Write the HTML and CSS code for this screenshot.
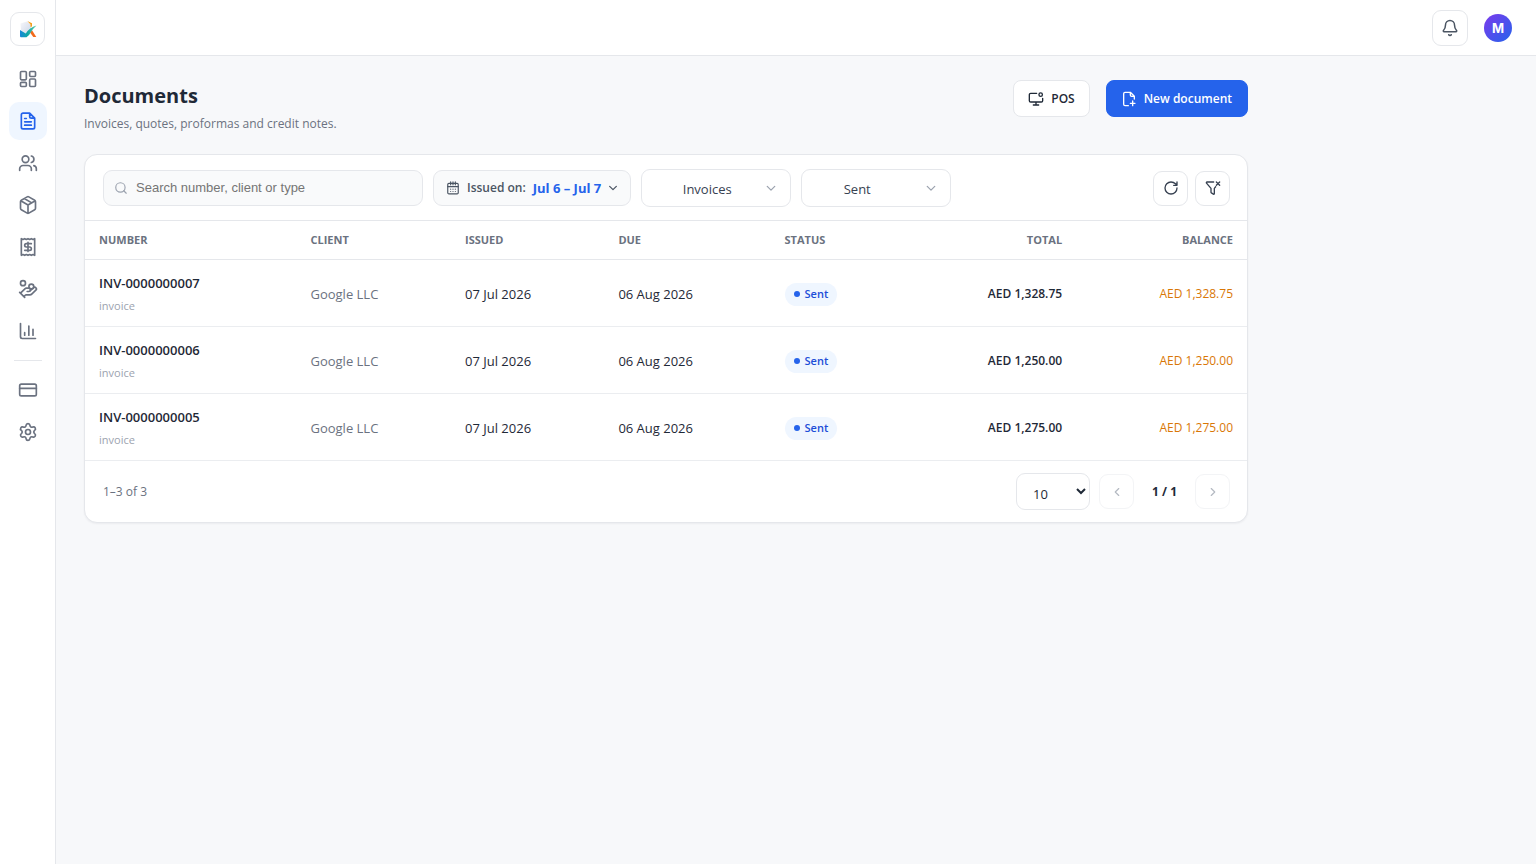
FILE: index.html
```
<!DOCTYPE html>
<html lang="en">
<head>
<meta charset="utf-8">
<meta name="viewport" content="width=device-width, initial-scale=1">
<title>Documents</title>
<link rel="stylesheet" href="styles.css">
</head>
<body>
<div class="app">
  <aside class="sidebar">
    <a class="brand" href="#" aria-label="Home">
      <svg width="18" height="18" viewBox="0 0 18 18">
        <defs>
          <linearGradient id="teal" x1="0" y1="0" x2="1" y2="0"><stop offset="0" stop-color="#1687d9"/><stop offset=".45" stop-color="#10a7a5"/><stop offset="1" stop-color="#5cc9a7"/></linearGradient>
          <linearGradient id="paper" x1="0" y1="0" x2="1" y2="1"><stop offset="0" stop-color="#f7f7fa"/><stop offset="1" stop-color="#ccd6e8"/></linearGradient>
        </defs>
        <path d="M1.500 3.500 8 1.500l4 3.500v5L7.500 14 2 10.500z" fill="url(#paper)"/>
        <path d="M8.300 1 13 3.200V6.500L11.500 7V4.500z" fill="#f59e1b"/>
        <path d="M11 12.500 13 10.200l4.300 6.800h-3z" fill="#f26a1b"/>
        <path d="M1 10 6.800 13.500Q10.500 7.500 17.500 5.500 14 8.500 12 12 10 16 7.500 17.300H2Q1 17.300 1 16z" fill="url(#teal)"/>
      </svg>
    </a>
    <nav class="nav" aria-label="Main">
      <a class="nav-item" href="#" aria-label="Dashboard"><svg class="icon icon-nav" viewBox="0 0 24 24"><rect x="3" y="3" width="7" height="10" rx="1.200"/><rect x="14" y="3" width="7" height="6" rx="1.200"/><rect x="14" y="12" width="7" height="9" rx="1.200"/><rect x="3" y="16" width="7" height="5" rx="1.200"/></svg></a>
      <a class="nav-item active" href="#" aria-label="Documents" aria-current="page"><svg class="icon icon-nav" viewBox="0 0 24 24"><path d="M14 2.500H6a2 2 0 0 0-2 2v15a2 2 0 0 0 2 2h12a2 2 0 0 0 2-2v-11zM14 2.500v4a2 2 0 0 0 2 2h4M8 9h2M8 13h8M8 17h8"/></svg></a>
      <a class="nav-item" href="#" aria-label="Clients"><svg class="icon icon-nav" viewBox="0 0 24 24"><circle cx="9" cy="7.500" r="4"/><path d="M2 21v-2a4 4 0 0 1 4-4h6a4 4 0 0 1 4 4v2M16 3.600a4 4 0 0 1 0 7.800M22 21v-2a4 4 0 0 0-3-3.870"/></svg></a>
      <a class="nav-item" href="#" aria-label="Products"><svg class="icon icon-nav" viewBox="0 0 24 24"><path d="M21 8a2 2 0 0 0-1-1.730l-7-4a2 2 0 0 0-2 0l-7 4A2 2 0 0 0 3 8v8a2 2 0 0 0 1 1.730l7 4a2 2 0 0 0 2 0l7-4A2 2 0 0 0 21 16zM12 22V12M3.300 7 12 12l8.700-5M7.500 4.270l9 5.150"/></svg></a>
      <a class="nav-item" href="#" aria-label="Expenses"><svg class="icon icon-nav" viewBox="0 0 24 24"><path d="M4 2v20l2-1 2 1 2-1 2 1 2-1 2 1 2-1 2 1V2l-2 1-2-1-2 1-2-1-2 1-2-1-2 1zM16 8h-6a2 2 0 0 0 0 4h4a2 2 0 0 1 0 4H8M12 6.500v11"/></svg></a>
      <a class="nav-item" href="#" aria-label="Payments"><svg class="icon icon-nav" viewBox="0 0 24 24"><path d="M11 15h2a2 2 0 1 0 0-4h-3c-.6 0-1.100.2-1.400.6L3 17M7 21l1.600-1.400c.3-.4.8-.6 1.400-.6h4c1.100 0 2.100-.4 2.800-1.200l4.600-4.400a2 2 0 0 0-2.750-2.910l-4.200 3.900M2 16l6 6"/><circle cx="16" cy="9" r="2.900"/><circle cx="6" cy="5" r="3"/></svg></a>
      <a class="nav-item" href="#" aria-label="Reports"><svg class="icon icon-nav" viewBox="0 0 24 24"><path d="M3 3v16a2 2 0 0 0 2 2h16M8 17v-3M13 17V6M18 17V10"/></svg></a>
      <hr class="nav-rule">
      <a class="nav-item" href="#" aria-label="Billing"><svg class="icon icon-nav" viewBox="0 0 24 24"><rect x="2" y="5" width="20" height="14" rx="2"/><path d="M2 10h20"/></svg></a>
      <a class="nav-item" href="#" aria-label="Settings"><svg class="icon icon-nav" viewBox="0 0 24 24"><path d="M9.670 4.140a2.340 2.340 0 0 1 4.660 0 2.340 2.340 0 0 0 3.320 1.910 2.340 2.340 0 0 1 2.330 4.030 2.340 2.340 0 0 0 0 3.840 2.340 2.340 0 0 1-2.330 4.030 2.340 2.340 0 0 0-3.320 1.910 2.340 2.340 0 0 1-4.660 0 2.340 2.340 0 0 0-3.320-1.910 2.340 2.340 0 0 1-2.330-4.030 2.340 2.340 0 0 0 0-3.840 2.340 2.340 0 0 1 2.330-4.030 2.340 2.340 0 0 0 3.320-1.910"/><circle cx="12" cy="12" r="3"/></svg></a>
    </nav>
  </aside>

  <div class="main">
    <header class="topbar">
      <button class="icon-btn bell" type="button" aria-label="Notifications"><svg class="icon icon-bell" viewBox="0 0 24 24"><path d="M10.300 21a2 2 0 0 0 3.400 0M3.260 15.330A1 1 0 0 0 4 17h16a1 1 0 0 0 .74-1.670C19.410 13.960 18 12.500 18 8A6 6 0 0 0 6 8c0 4.500-1.410 5.960-2.740 7.330"/></svg></button>
      <button class="avatar" type="button" aria-label="Account">M</button>
    </header>

    <main class="content">
      <div class="page-head">
        <div>
          <h1 class="title">Documents</h1>
          <p class="subtitle">Invoices, quotes, proformas and credit notes.</p>
        </div>
        <div class="actions">
          <button class="btn" type="button"><svg class="icon" viewBox="0 0 24 24"><path d="M13 3.500H4a2 2 0 0 0-2 2v9a2 2 0 0 0 2 2h16a2 2 0 0 0 2-2V11M12 16.500V21M8 21h8"/><circle cx="19" cy="5.500" r="2.600"/></svg>POS</button>
          <button class="btn btn-primary" type="button"><svg class="icon" viewBox="0 0 24 24"><path d="M11 22H6a2 2 0 0 1-2-2V4a2 2 0 0 1 2-2h8l6 6v4M14 2v4a2 2 0 0 0 2 2h4M14 18.500h7M17.500 15v7"/></svg>New document</button>
        </div>
      </div>

      <section class="card">
        <div class="toolbar">
          <label class="search">
            <svg class="icon icon-sm" viewBox="0 0 24 24"><circle cx="11" cy="11" r="8"/><path d="m21 21-4.300-4.300"/></svg>
            <input type="search" placeholder="Search number, client or type" aria-label="Search documents">
          </label>
          <button class="date-btn" type="button">
            <svg class="icon icon-sm" viewBox="0 0 24 24"><rect x="3" y="4" width="18" height="18" rx="2"/><path d="M8 1.500v5M16 1.500v5M12 1.500v5M3 9.500h18M8 14h.01M12 14h.01M16 14h.01M8 18h.01M12 18h.01M16 18h.01"/></svg>
            <span>Issued on:</span><strong>Jul 6 – Jul 7</strong>
            <svg class="icon icon-chev" viewBox="0 0 24 24"><path d="m4 8 8 8 8-8"/></svg>
          </button>
          <div class="select">
            <select aria-label="Document type"><option>Invoices</option><option>Quotes</option></select>
            <svg class="icon icon-chev" viewBox="0 0 24 24"><path d="m3 8 9 9 9-9"/></svg>
          </div>
          <div class="select select-status">
            <select aria-label="Status"><option>Sent</option><option>Paid</option></select>
            <svg class="icon icon-chev" viewBox="0 0 24 24"><path d="m3 8 9 9 9-9"/></svg>
          </div>
          <div class="tools">
            <button class="icon-btn" type="button" aria-label="Refresh"><svg class="icon" viewBox="0 0 24 24"><path d="M21 12a9 9 0 1 1-9-9c2.520 0 4.930 1 6.740 2.740L21 8M21 3v5h-5"/></svg></button>
            <button class="icon-btn" type="button" aria-label="Clear filters"><svg class="icon" viewBox="0 0 24 24"><path d="M13 3H3a1 1 0 0 0-.74 1.670L9 12.500V18.500a1 1 0 0 0 .55.900l3 1.800A1 1 0 0 0 14 20.300V12.500l2-2.300M17 3l5 5M22 3l-5 5"/></svg></button>
          </div>
        </div>

        <table class="docs">
          <colgroup><col class="c-num"><col class="c-client"><col class="c-issued"><col class="c-due"><col class="c-status"><col class="c-total"><col class="c-bal"></colgroup>
          <thead>
            <tr><th>Number</th><th>Client</th><th>Issued</th><th>Due</th><th>Status</th><th class="num">Total</th><th class="num">Balance</th></tr>
          </thead>
          <tbody>
            <tr><td><a class="doc-no" href="#">INV-0000000007</a><span class="doc-type">invoice</span></td><td class="muted">Google LLC</td><td>07 Jul 2026</td><td>06 Aug 2026</td><td><span class="badge">Sent</span></td><td class="num total">AED 1,328.75</td><td class="num balance">AED 1,328.75</td></tr>
            <tr><td><a class="doc-no" href="#">INV-0000000006</a><span class="doc-type">invoice</span></td><td class="muted">Google LLC</td><td>07 Jul 2026</td><td>06 Aug 2026</td><td><span class="badge">Sent</span></td><td class="num total">AED 1,250.00</td><td class="num balance">AED 1,250.00</td></tr>
            <tr><td><a class="doc-no" href="#">INV-0000000005</a><span class="doc-type">invoice</span></td><td class="muted">Google LLC</td><td>07 Jul 2026</td><td>06 Aug 2026</td><td><span class="badge">Sent</span></td><td class="num total">AED 1,275.00</td><td class="num balance">AED 1,275.00</td></tr>
          </tbody>
        </table>

        <footer class="pager">
          <span class="range">1–3 of 3</span>
          <select class="page-size" aria-label="Rows per page"><option>10</option><option>25</option><option>50</option></select>
          <button class="icon-btn" type="button" disabled aria-label="Previous page"><svg class="icon icon-sm" viewBox="0 0 24 24"><path d="m15 18-6-6 6-6"/></svg></button>
          <span class="page-no">1 / 1</span>
          <button class="icon-btn" type="button" disabled aria-label="Next page"><svg class="icon icon-sm" viewBox="0 0 24 24"><path d="m9 18 6-6-6-6"/></svg></button>
        </footer>
      </section>
    </main>
  </div>
</div>
</body>
</html>
```
FILE: styles.css
```
:root {
  --ink: #1f2937;
  --muted: #6b7280;
  --faint: #9ca3af;
  --line: #e5e7eb;
  --blue: #2563eb;
  --soft: #f9fafb;
}
* { box-sizing: border-box; }
body {
  margin: 0;
  background: #f7f8fa;
  color: var(--ink);
  font: 13px/20px "Open Sans", "Noto Sans", sans-serif;
}
button, select { font: inherit; color: inherit; margin: 0; }
button { cursor: pointer; }
a { color: inherit; text-decoration: none; }

.icon {
  width: 16px;
  height: 16px;
  flex: none;
  fill: none;
  stroke: currentColor;
  stroke-width: 2;
  stroke-linecap: round;
  stroke-linejoin: round;
}
.icon-nav { width: 20px; height: 20px; }
.icon-bell { width: 18px; height: 18px; }
.icon-sm { width: 14px; height: 14px; }
.icon-chev { width: 10px; height: 10px; stroke-width: 3; }

.app { display: flex; min-height: 100vh; }
.sidebar {
  width: 56px;
  flex: none;
  display: flex;
  flex-direction: column;
  align-items: center;
  padding-top: 12px;
  background: #fff;
  border-right: 1px solid var(--line);
}
.brand {
  display: grid;
  place-items: center;
  width: 35px;
  height: 34px;
  border: 1px solid var(--line);
  border-radius: 9px;
}
.nav {
  display: flex;
  flex-direction: column;
  align-items: center;
  gap: 4px;
  margin-top: 14px;
}
.nav-item {
  display: grid;
  place-items: center;
  width: 38px;
  height: 38px;
  border-radius: 10px;
  color: var(--muted);
}
.nav-item.active { background: #eff6ff; color: var(--blue); }
.nav-rule {
  width: 28px;
  height: 1px;
  margin: 6px 0;
  border: 0;
  background: var(--line);
}

.main { flex: 1; min-width: 0; }
.topbar {
  display: flex;
  align-items: center;
  justify-content: flex-end;
  gap: 16px;
  height: 56px;
  padding: 0 24px;
  background: #fff;
  border-bottom: 1px solid var(--line);
}
.icon-btn {
  display: grid;
  place-items: center;
  width: 35px;
  height: 35px;
  padding: 0;
  background: #fff;
  border: 1px solid var(--line);
  border-radius: 9px;
}
.icon-btn:disabled { color: #b4b9c2; border-color: #f3f4f6; cursor: default; }
.bell { width: 36px; height: 36px; color: #4b5563; }
.avatar {
  width: 28px;
  height: 28px;
  padding: 0;
  border: 0;
  border-radius: 50%;
  background: linear-gradient(135deg, #7c3aed, #2563eb);
  color: #fff;
  font: 700 13px/28px Inter, sans-serif;
}

.content { max-width: 1220px; padding: 24px 28px; }
.page-head {
  display: flex;
  align-items: flex-start;
  justify-content: space-between;
  margin-bottom: 20px;
}
.title { margin: 0; font-size: 20px; line-height: 32px; font-weight: 700; }
.subtitle { margin: 2px 0 0; color: var(--muted); font-size: 12px; }
.actions { display: flex; gap: 16px; }
.btn {
  display: flex;
  align-items: center;
  gap: 7px;
  height: 37px;
  padding: 0 14px;
  background: #fff;
  border: 1px solid var(--line);
  border-radius: 8px;
  font-size: 12px;
  font-weight: 600;
}
.btn-primary {
  padding: 0 15px 0 14px;
  background: var(--blue);
  border-color: var(--blue);
  color: #fff;
}

.card {
  background: #fff;
  border: 1px solid var(--line);
  border-radius: 13px;
  box-shadow: 0 1px 2px rgba(16, 24, 40, .05);
  overflow: hidden;
}
.toolbar {
  display: flex;
  align-items: center;
  gap: 10px;
  padding: 14px 17px 13px 18px;
}
.search {
  display: flex;
  align-items: center;
  gap: 8px;
  width: 320px;
  height: 36px;
  padding: 0 10px;
  background: var(--soft);
  border: 1px solid var(--line);
  border-radius: 9px;
  color: var(--faint);
}
.search input {
  flex: 1;
  min-width: 0;
  padding: 0;
  border: 0;
  outline: 0;
  background: none;
  color: var(--ink);
  font: 13px/20px "Liberation Sans", Arial, sans-serif;
}
.search input::placeholder { color: #757575; }
.date-btn {
  display: flex;
  align-items: center;
  gap: 7px;
  height: 36px;
  padding: 0 12px;
  background: var(--soft);
  border: 1px solid var(--line);
  border-radius: 9px;
  color: #4b5563;
  font-size: 12px;
  font-weight: 600;
}
.date-btn strong { color: var(--blue); font-size: 13px; font-weight: 700; }
.select { display: grid; align-items: center; width: 150px; }
.select > * { grid-area: 1 / 1; }
.select select {
  appearance: none;
  width: 100%;
  height: 38px;
  padding: 1px 32px 0 14px;
  background: #fff;
  border: 1px solid var(--line);
  border-radius: 9px;
  color: #374151;
  text-align-last: center;
}
.select-status select { padding-right: 52px; }
.select .icon { justify-self: end; margin-right: 15px; color: var(--faint); pointer-events: none; }
.tools { display: flex; gap: 7px; margin-left: auto; }
.tools .icon-btn { color: #374151; }

.docs { width: 100%; border-collapse: collapse; table-layout: fixed; }
.c-num { width: 18.2%; }
.c-client { width: 13.3%; }
.c-issued { width: 13.2%; }
.c-due { width: 14.3%; }
.c-status { width: 12%; }
.c-total { width: 14.3%; }
.c-bal { width: 14.7%; }
.docs th {
  height: 39px;
  padding: 0 14px;
  border-top: 1px solid var(--line);
  border-bottom: 1px solid var(--line);
  color: var(--muted);
  font-size: 11px;
  font-weight: 700;
  text-align: left;
  text-transform: uppercase;
}
.docs td {
  height: 67px;
  padding: 2px 14px 0;
  border-bottom: 1px solid #ebedf0;
  white-space: nowrap;
}
.docs .num { text-align: right; }
.docs .muted { color: var(--muted); }
.doc-no { display: block; font-weight: 600; }
.doc-type { display: block; margin-top: 3px; color: var(--faint); font-size: 11px; }
.docs .total { font-size: 12px; font-weight: 600; }
.docs .balance { color: #d97706; font-size: 12px; }
.badge {
  display: inline-flex;
  align-items: center;
  gap: 5px;
  height: 23px;
  padding: 0 9px;
  border-radius: 12px;
  background: #eff6ff;
  color: #1d4ed8;
  font-size: 11px;
  font-weight: 600;
}
.badge::before {
  content: "";
  width: 6px;
  height: 6px;
  border-radius: 50%;
  background: var(--blue);
}

.pager {
  display: flex;
  align-items: center;
  gap: 9px;
  padding: 12px 17px 12px 18px;
}
.range { margin-right: auto; color: var(--muted); font-size: 12px; }
.page-size {
  width: 74px;
  height: 37px;
  padding: 4px 0 0 12px;
  background: #fff;
  border: 1px solid var(--line);
  border-radius: 9px;
}
.page-no { padding: 0 9px; font-size: 12px; font-weight: 700; }
```
